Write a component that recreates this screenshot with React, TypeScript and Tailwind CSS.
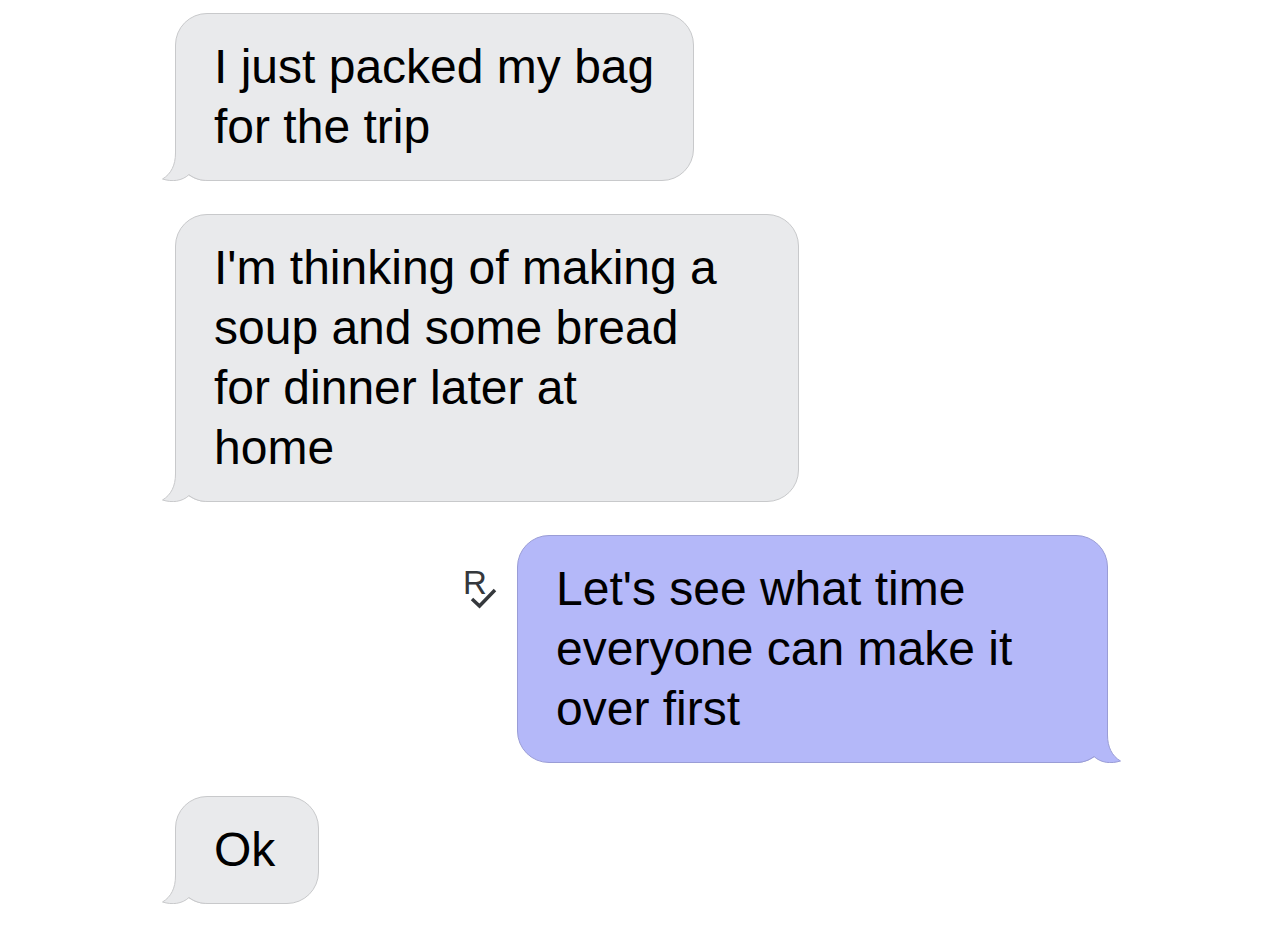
interface Message {
  id: number;
  lines: string[];
  sent: boolean;
  width: string;
}

const messages: Message[] = [
  { id: 1, lines: ['I just packed my bag', 'for the trip'], sent: false, width: 'w-[519px]' },
  {
    id: 2,
    lines: ["I'm thinking of making a", 'soup and some bread', 'for dinner later at', 'home'],
    sent: false,
    width: 'w-[624px]',
  },
  { id: 3, lines: ["Let's see what time", 'everyone can make it', 'over first'], sent: true, width: 'w-[591px]' },
  { id: 4, lines: ['Ok'], sent: false, width: 'w-36' },
];

function Tail({ sent }: { sent: boolean }) {
  return (
    <svg
      aria-hidden="true"
      viewBox="0 0 46 40"
      className={
        sent
          ? 'absolute -right-3.5 -bottom-px h-10 w-[46px] -scale-x-100 fill-[#b4b8f9] stroke-[#9a9dd6]'
          : 'absolute -left-3.5 -bottom-px h-10 w-[46px] fill-[#e9eaec] stroke-[#c8c9cb]'
      }
    >
      <path stroke="none" d="M13.5 0V12C13.5 24 9 33 .5 38C10 41 20 40 27 33.5C33 38 39 39.5 46 39.5V0Z" />
      <path fill="none" d="M13.5 0V12C13.5 24 9 33 .5 38C10 41 20 40 27 33.5C33 38 39 39.5 46 39.5" />
    </svg>
  );
}

// "R" with a check mark: the message has been read
function ReadReceipt() {
  return (
    <svg
      role="img"
      aria-label="Read"
      viewBox="0 0 32 40"
      className="mt-[34px] mr-[21px] h-10 w-8 shrink-0 overflow-visible"
    >
      <text x="-1" y="25" className="fill-[#35383c] text-[33px]">
        R
      </text>
      <path className="fill-none stroke-[#35383c]" strokeWidth="3.5" d="M8 30L15.500 37L31 21" />
    </svg>
  );
}

function Bubble({ message }: { message: Message }) {
  const { lines, sent, width } = message;
  return (
    <li className={`flex items-start ${sent ? 'justify-end' : 'justify-start'}`}>
      {sent && <ReadReceipt />}
      <div
        className={`relative max-w-full rounded-[32px] border pt-[23px] pb-[23px] pl-[38px] ${width} ${
          sent ? 'border-[#9a9dd6] bg-[#b4b8f9]' : 'border-[#c8c9cb] bg-[#e9eaec]'
        }`}
      >
        <Tail sent={sent} />
        <p className="relative text-[48px] leading-[60px] text-black">
          {lines.map((line) => (
            <span key={line} className="block">
              {line}
            </span>
          ))}
        </p>
      </div>
    </li>
  );
}

export default function App() {
  return (
    <main className="min-h-screen bg-white pt-[13px] pr-[172px] pl-[175px] font-['Liberation_Sans',Arial,sans-serif]">
      <ul className="flex flex-col gap-[33px]">
        {messages.map((message) => (
          <Bubble key={message.id} message={message} />
        ))}
      </ul>
    </main>
  );
}
